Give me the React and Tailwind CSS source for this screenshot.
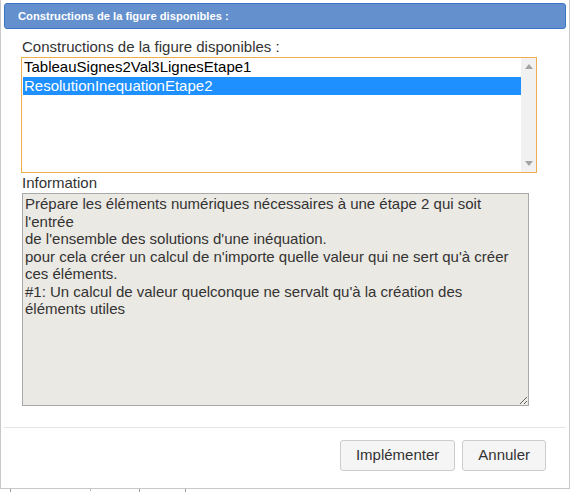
import React from 'react';

const info = `Prépare les éléments numériques nécessaires à une étape 2 qui soit l'entrée
de l'ensemble des solutions d'une inéquation.
pour cela créer un calcul de n'importe quelle valeur qui ne sert qu'à créer ces éléments.
#1: Un calcul de valeur quelconque ne servalt qu'à la création des éléments utiles`;

const items = ['TableauSignes2Val3LignesEtape1', 'ResolutionInequationEtape2'];

export default function App() {
    const [selected, setSelected] = React.useState(1);

    return (
        <div className="w-[572px] h-[492px] bg-white relative overflow-hidden" style={{ fontFamily: '"Liberation Sans", Arial, sans-serif' }}>
            {/* ── DIALOG ───────────────────────────────────────── */}
            <div className="w-[570px] h-[489px] border-l border-r border-b border-[#c8c8c8] flex flex-col">
                {/* title bar */}
                <div className="mx-[3px] mt-[3px] h-[26px] bg-[#6490ce] border border-[#3c74c4] rounded-[3px] flex items-center px-[13px]">
                    <span className="text-white font-bold text-[11.2px]">Constructions de la figure disponibles :</span>
                </div>

                <div className="pl-[20px] pr-[32px] pt-[8px] text-[15px] text-[#333]">
                    <p className="pl-[1px] leading-[20px]">Constructions de la figure disponibles :</p>

                    {/* list of constructions */}
                    <div className="h-[116px] border border-[#f0ad4e] flex bg-white">
                        <div className="flex-1 pl-[1px]">
                            {items.map((it, i) => (
                                <div
                                    key={it}
                                    onClick={() => setSelected(i)}
                                    className={'h-[18.5px] leading-[18px] px-[1px] text-[15px] cursor-default ' + (selected === i ? 'bg-[#1e90ff] text-white' : 'text-black')}
                                >
                                    {it}
                                </div>
                            ))}
                        </div>
                        <div className="w-[15px] bg-[#f1f1f1] flex flex-col justify-between items-center py-[6px]">
                            <svg width="8" height="5" viewBox="0 0 8 5"><path d="M0 5 L4 0 L8 5 Z" fill="#a3a3a3" /></svg>
                            <svg width="8" height="5" viewBox="0 0 8 5"><path d="M0 0 L4 5 L8 0 Z" fill="#a3a3a3" /></svg>
                        </div>
                    </div>

                    <p className="pl-[1px] leading-[20px]">Information</p>
                    <textarea
                        readOnly
                        value={info}
                        className="block w-[507px] h-[213px] ml-[1px] bg-[#ebe9e3] border border-[#a9a9a9] text-[15px] leading-[17.5px] text-[#333] px-[2px] pt-[1px] resize-y outline-none"
                        style={{ fontFamily: '"Liberation Sans", Arial, sans-serif' }}
                    />
                </div>

                {/* footer */}
                <div className="mx-[3px] mt-[21px] border-t border-[#e5e5e5] flex justify-end gap-[7px] pt-[12px] pr-[20px]">
                    <button className="h-[31px] px-[15px] bg-[#f5f5f5] border border-[#cdcdcd] rounded-[3px] text-[15px] text-[#333]">Implémenter</button>
                    <button className="h-[31px] px-[15px] bg-[#f5f5f5] border border-[#cdcdcd] rounded-[3px] text-[15px] text-[#333]">Annuler</button>
                </div>
            </div>

            {/* page beneath the dialog */}
            <div className="absolute left-0 right-0 top-[489px] h-[3px] flex">
                <div className="w-[10px]" />
                <div className="w-px h-[3px] bg-[#9a9a9a]" />
                <div className="w-[79px]" />
                <div className="w-px h-[2px] bg-[#bdbdbd]" />
                <div className="w-[48px]" />
                <div className="w-px h-[3px] bg-[#9a9a9a]" />
                <div className="w-[45px]" />
                <div className="w-px h-[3px] bg-[#9a9a9a]" />
            </div>
        </div>
    );
}
